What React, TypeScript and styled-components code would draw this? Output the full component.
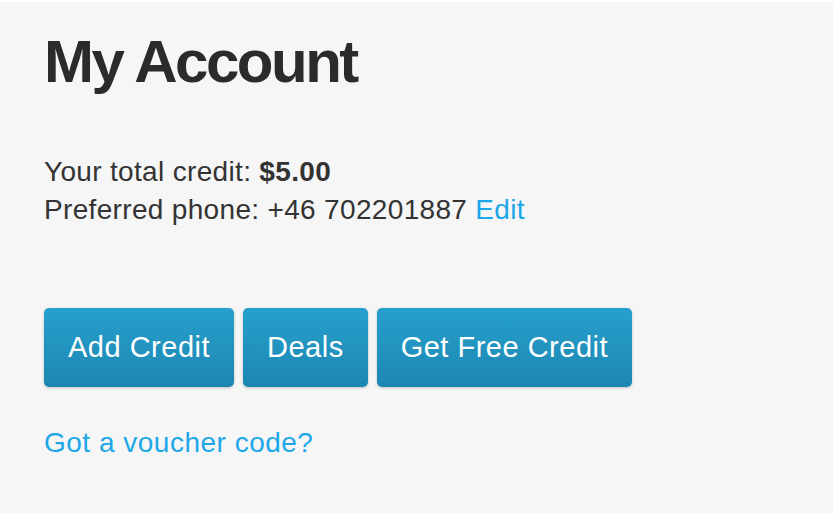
import React from "react";
import styled, { createGlobalStyle } from "styled-components";

const Global = createGlobalStyle`
  html, body {
    margin: 0;
    padding: 0;
    background: #ffffff;
  }
  body {
    font-family: "Liberation Sans", Arial, Helvetica, sans-serif;
    color: #333333;
  }
`;

const Page = styled.div`
  margin: 2px 3px 0 0;
  height: 511px;
  background: #f6f6f6;
  padding: 27px 44px 0;
  box-sizing: border-box;
`;

const Title = styled.h1`
  margin: 0;
  font-size: 60px;
  line-height: 66px;
  font-weight: 700;
  letter-spacing: -2.5px;
  color: #2b2b2b;
`;

const Info = styled.div`
  margin-top: 58px;
  font-size: 28px;
  line-height: 38px;
  letter-spacing: 0.33px;
`;

const Line = styled.div`
  white-space: nowrap;
`;

const Link = styled.a`
  color: #1ea7e8;
  text-decoration: none;
  cursor: pointer;
`;

const Actions = styled.div`
  display: flex;
  gap: 9px;
  margin-top: 79px;
`;

const Button = styled.button`
  height: 79px;
  padding: 0 24px;
  border: none;
  border-radius: 5px;
  background: linear-gradient(#27a0cd, #1c86b1);
  box-shadow: 0 1px 3px rgba(0, 0, 0, 0.22);
  color: #ffffff;
  font-family: "Liberation Sans", Arial, Helvetica, sans-serif;
  font-size: 29px;
  line-height: 79px;
  letter-spacing: 0.5px;
  cursor: pointer;
`;

const Voucher = styled.div`
  margin-top: 37px;
  font-size: 28px;
  line-height: 38px;
  letter-spacing: 0.5px;
`;

export default function App() {
  return (
    <>
      <Global />
      <Page>
        <Title>My Account</Title>
        <Info>
          <Line>
            Your total credit: <b>$5.00</b>
          </Line>
          <Line>
            Preferred phone: +46 702201887 <Link>Edit</Link>
          </Line>
        </Info>
        <Actions>
          <Button>Add Credit</Button>
          <Button>Deals</Button>
          <Button>Get Free Credit</Button>
        </Actions>
        <Voucher>
          <Link>Got a voucher code?</Link>
        </Voucher>
      </Page>
    </>
  );
}
